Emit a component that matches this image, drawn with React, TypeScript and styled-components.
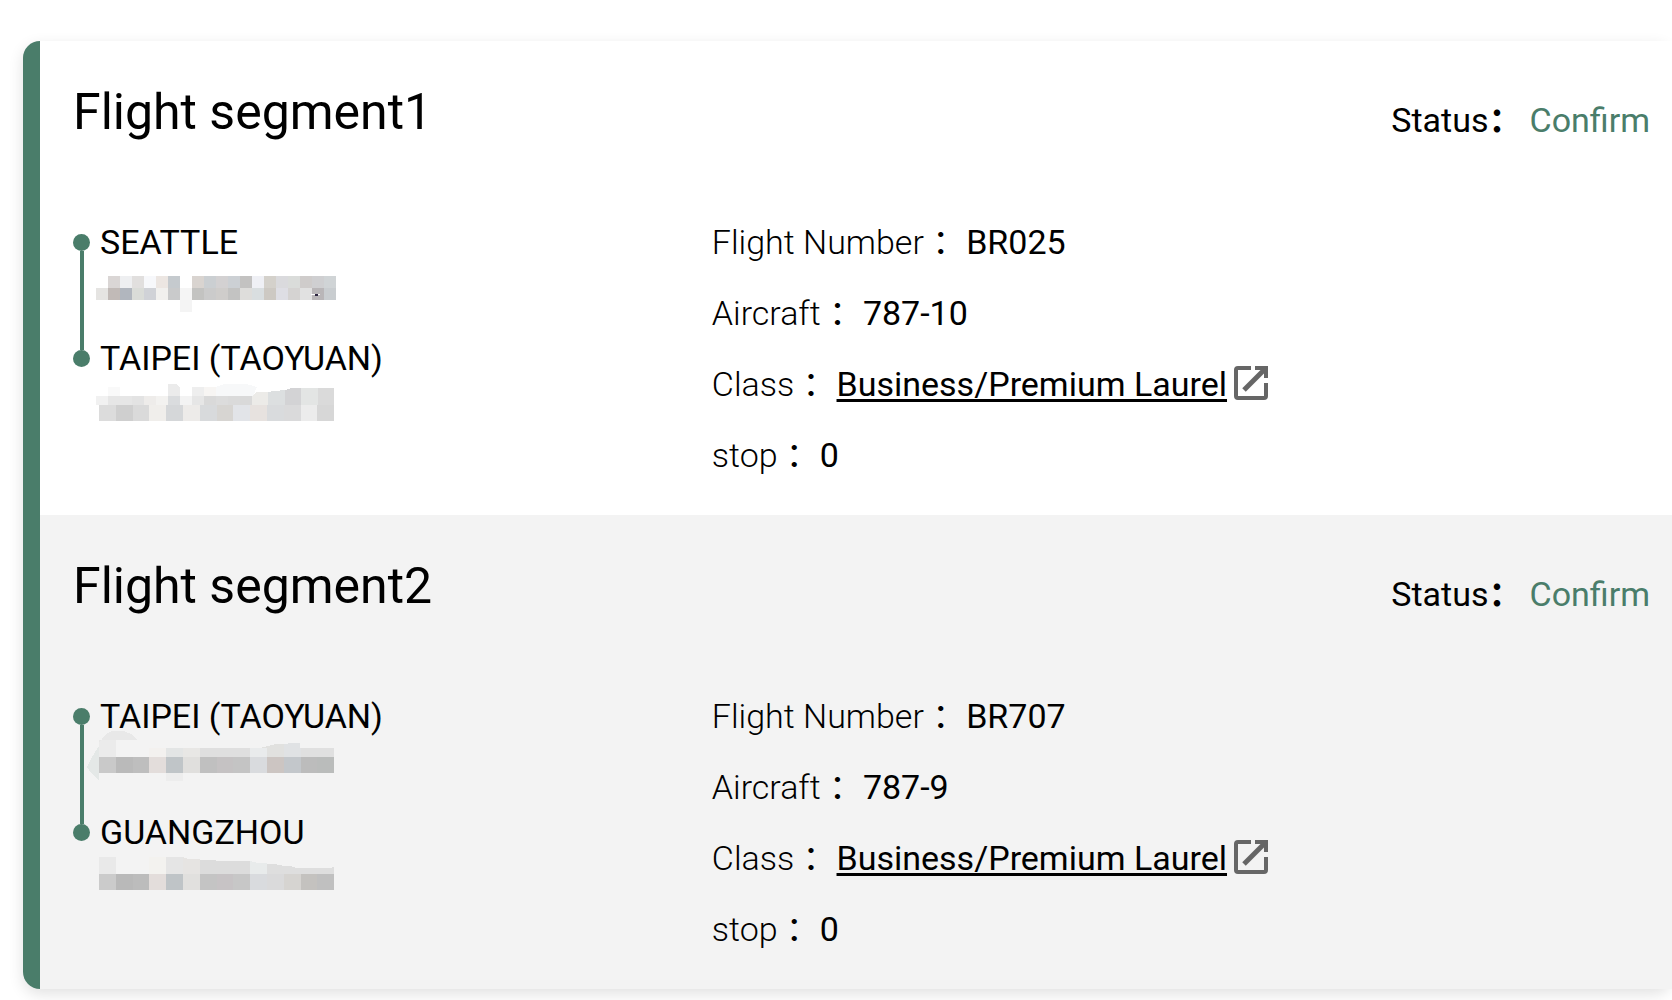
import React from "react";
import styled, { createGlobalStyle } from "styled-components";

const GlobalStyle = createGlobalStyle`
  * { box-sizing: border-box; }
  body {
    margin: 0;
    background: #fff;
    color: #000;
    font-family: Roboto, "Noto Sans CJK SC", sans-serif;
    overflow-x: hidden;
  }
`;

const Page = styled.main`
  padding: 41px 0 11px 23px;
`;

const Card = styled.div`
  border-left: 17px solid #4a7d6a;
  border-radius: 17px;
  box-shadow: 0 5px 15px rgba(0, 0, 0, 0.12);
  background: #fff;
`;

const Segment = styled.section<{ $shaded: boolean }>`
  padding: 41px 22px 24px 33px;
  background: ${(p) => (p.$shaded ? "#f3f3f3" : "#fff")};
`;

const Header = styled.header`
  display: flex;
  justify-content: space-between;
  align-items: flex-end;
`;

const Title = styled.h2`
  margin: 0;
  font-size: 50px;
  line-height: 60px;
  font-weight: 400;
`;

const Status = styled.p`
  margin: 0;
  display: flex;
  gap: 7px;
  font-size: 34px;
  line-height: 44px;
`;

const StatusValue = styled.span`
  color: #4a7d6a;
`;

const Colon = styled.span<{ $bold?: boolean }>`
  font-weight: ${(p) => (p.$bold ? 700 : 400)};
`;

const Body = styled.div`
  display: grid;
  grid-template-columns: 2fr 3fr;
  margin-right: -20px;
  padding-top: 65px;
`;

const Route = styled.div`
  display: flex;
  gap: 10px;
  padding-top: 14px;
`;

const Track = styled.div`
  display: flex;
  flex-direction: column;
  align-items: center;
  width: 17px;
  padding-top: 13px;
`;

const Dot = styled.span`
  width: 17px;
  height: 17px;
  border-radius: 50%;
  background: #4a7d6a;
`;

const Line = styled.span`
  width: 4px;
  height: 99px;
  background: #4a7d6a;
`;

const Stops = styled.ol`
  list-style: none;
  margin: 0;
  padding: 0;
`;

const Stop = styled.li`
  height: 116px;
  font-size: 34px;
  line-height: 42px;
`;

const Mosaic = styled.svg`
  display: block;
  overflow: visible;
`;

const Details = styled.dl`
  margin: 0;
`;

const Row = styled.div`
  display: flex;
  align-items: center;
  font-size: 34px;
  line-height: 71px;
`;

const Label = styled.dt`
  font-weight: 300;
  white-space: pre;
`;

const Value = styled.dd`
  display: flex;
  align-items: center;
  gap: 6px;
  margin: 0;
`;

const ClassLink = styled.a`
  color: inherit;
  text-decoration: underline;
  text-decoration-thickness: 3px;
  text-underline-offset: 3px;
`;

type Cells = { x: number; y: number; w: number; h: number; colors: string[] };
type Mask = { rows: Cells[]; shapes?: { d: string; fill: string }[] };

const WIDE = 16.8;

const masks: Record<string, Mask> = {
  a: {
    rows: [
      { x: -4, y: 13, w: 12, h: 12, colors: ["", "#dad6d5", "#eeeff1", "#e1dfde", "#f7f8fb", "#ece6e2", "#c5cace", "", "#d9d4d0", "#cbcfd2", "#d3d1d2", "#ccd0d4", "#c3c2c1", "#eff0f5", "#d4d1cb", "#dadadd", "#dadcda", "#cfcccb", "#cfcfd1", "#d0d4d6"] },
      { x: -4, y: 25, w: 12, h: 12, colors: ["#e5e4e2", "#c1bab7", "#b1b6be", "#dadcd8", "#d0d2d7", "#f1f0ee", "#c9cacb", "#f5f5f5", "#c3c3c1", "#cbcbcb", "#cfcdcb", "#c3c3c2", "#dedddb", "#d9dee0", "#cdc9c3", "#dedee4", "#d5d3d2", "#e1e1e1", "#b9b6b8", "#c9cdd0"] },
      { x: 80, y: 37, w: 12, h: 12, colors: ["#f4f4f4"] },
    ],
    shapes: [
      { d: "M211 31H220V32H211Z", fill: "#fff" },
      { d: "M215 31H218V33H215Z", fill: "#2b2440" },
    ],
  },
  b: {
    rows: [
      { x: -4, y: 8, w: 12, h: 9, colors: ["", "#f9f9f9", "", "", "", "", "#ebebeb", "", "#eeeeee", "#f7f5f3"] },
      { x: -4, y: 17, w: 12, h: 9, colors: ["#f1f1f1", "#e6e6e6", "#e6e6e6", "#e3e3e3", "#eeecea", "#f3f2f0", "#dadcde", "#f3f3f3", "#e6e6e6", "#d9d9d9", "#dcdcdc", "#dadada", "#d9d9d9"] },
      { x: -1, y: 26, w: WIDE, h: 16, colors: ["#dcdcdc", "#cfcfcf", "#dadada", "#f0eeeb", "#d5d7d9", "#edebe9", "#d8dadc", "#d7d5d2", "#e2e4e8", "#e7e2df", "#d9dbdd", "#dadadb", "#ececec", "#d7d7d7"] },
    ],
    shapes: [
      { d: "M68 8V5H76L80 8Z", fill: "#ebebeb" },
      { d: "M116 17V8L124 5H146L157 8L153 17Z", fill: "#f7f8f9" },
      { d: "M152 26V17L156 13H168V26Z", fill: "#ecebe8" },
      { d: "M168 26V13L174 12L185 11V26Z", fill: "#dcdfe0" },
      { d: "M185 26V11L191 9H201V26Z", fill: "#d3d3d5" },
      { d: "M201 26V9H218V26Z", fill: "#e3e5e4" },
      { d: "M218 26V9H234V26Z", fill: "#dadada" },
    ],
  },
  c: {
    rows: [
      { x: -1, y: 3, w: WIDE, h: 17, colors: ["#ebebeb"] },
      { x: -1, y: 11, w: WIDE, h: 9, colors: ["", "", "", "#f3f1ef", "#e3e5e5", "#e8e7e5", "#dfdfdf", "#dfdfdf", "#dfdfdf", "#e9ebec", "#e1e1df", "#e0e2e4", "#e0e0e0", "#e0e0e0"] },
      { x: -1, y: 20, w: WIDE, h: 16, colors: ["#c9c9c9", "#bababa", "#bebebe", "#e3dddb", "#c0c5c8", "#e0dfdd", "#c0c0c0", "#c5c2c3", "#c4c4c4", "#d9dbde", "#ccc5c2", "#c3c7cb", "#bcbcbc", "#babcbb"] },
      { x: 66, y: 36, w: WIDE, h: 8, colors: ["#ededed"] },
    ],
    shapes: [
      { d: "M-1 9L-8 20L-13 30L-8 37L-1 44Z", fill: "#e4e8e7" },
      { d: "M-1 6L6 -3L12 -6H24L31 -3L38 3H-1Z", fill: "#e8e8e8" },
      { d: "M160 11L168 9L176 7H184V11Z", fill: "#e1e1df" },
      { d: "M184 11V7L192 6H200V11Z", fill: "#e0e2e4" },
    ],
  },
  d: {
    rows: [
      { x: -1, y: 4, w: WIDE, h: 17, colors: ["#e9e9e9", "", "", "#f3f2ef", "#e5e5e5"] },
      { x: -1, y: 21, w: WIDE, h: 16, colors: ["#cbcbcb", "#b9b9b9", "#bcbcbc", "#e3dddb", "#bfc4c7", "#e1e0de", "#c4c4c4", "#c7c3c5", "#c7c7c7", "#d9dbde", "#dadadb", "#d6d4d1", "#c4c2bf", "#c0c0c0"] },
    ],
    shapes: [
      { d: "M83 21V4L88 6H100V21Z", fill: "#e6e4e2" },
      { d: "M100 21V7H115L117 8H150V21Z", fill: "#dcdcdc" },
      { d: "M150 21V8L158 10H167V21Z", fill: "#e8ebeb" },
      { d: "M167 21V11H175L184 13H190L196 15H230L234 14V21Z", fill: "#dedede" },
    ],
  },
};

function Redacted({ id }: { id: string }) {
  const mask = masks[id];
  return (
    <Mosaic width="240" height="48" shapeRendering="crispEdges" aria-hidden="true">
      {mask.rows.map((row) =>
        row.colors.map((c, i) =>
          c ? <rect key={`${row.y}-${i}`} x={row.x + i * row.w} y={row.y} width={row.w} height={row.h} fill={c} /> : null
        )
      )}
      {mask.shapes?.map((s) => <path key={s.d} d={s.d} fill={s.fill} />)}
    </Mosaic>
  );
}

function OpenIcon() {
  return (
    <svg width="36" height="40" viewBox="0 0 36 40" fill="none" stroke="#666" strokeWidth="4" aria-hidden="true">
      <path d="M18 3H5Q3 3 3 5V31Q3 33 5 33H31Q33 33 33 31V18" />
      <path d="M11 25L32 4" strokeWidth="5" />
      <path d="M22 3H33V13" />
      <path d="M26 3H33V10Z" fill="#666" stroke="none" />
    </svg>
  );
}

const segments = [
  { title: "Flight segment1", stops: [["SEATTLE", "a"], ["TAIPEI (TAOYUAN)", "b"]], number: "BR025", aircraft: "787-10" },
  { title: "Flight segment2", stops: [["TAIPEI (TAOYUAN)", "c"], ["GUANGZHOU", "d"]], number: "BR707", aircraft: "787-9" },
];

function Detail({ label, children }: { label: string; children: React.ReactNode }) {
  return (
    <Row>
      <Label>{label} <Colon>：</Colon></Label>
      <Value>{children}</Value>
    </Row>
  );
}

export default function App() {
  return (
    <Page>
      <GlobalStyle />
      <Card>
        {segments.map((s, i) => (
          <Segment key={s.title} $shaded={i % 2 === 1}>
            <Header>
              <Title>{s.title}</Title>
              <Status>
                <span>Status<Colon $bold>：</Colon></span>
                <StatusValue>Confirm</StatusValue>
              </Status>
            </Header>
            <Body>
              <Route>
                <Track>
                  <Dot />
                  <Line />
                  <Dot />
                </Track>
                <Stops>
                  {s.stops.map(([city, mask]) => (
                    <Stop key={city}>
                      {city}
                      <Redacted id={mask} />
                    </Stop>
                  ))}
                </Stops>
              </Route>
              <Details>
                <Detail label="Flight Number">{s.number}</Detail>
                <Detail label="Aircraft">{s.aircraft}</Detail>
                <Detail label="Class">
                  <ClassLink href="#class">Business/Premium Laurel</ClassLink>
                  <OpenIcon />
                </Detail>
                <Detail label="stop">0</Detail>
              </Details>
            </Body>
          </Segment>
        ))}
      </Card>
    </Page>
  );
}
